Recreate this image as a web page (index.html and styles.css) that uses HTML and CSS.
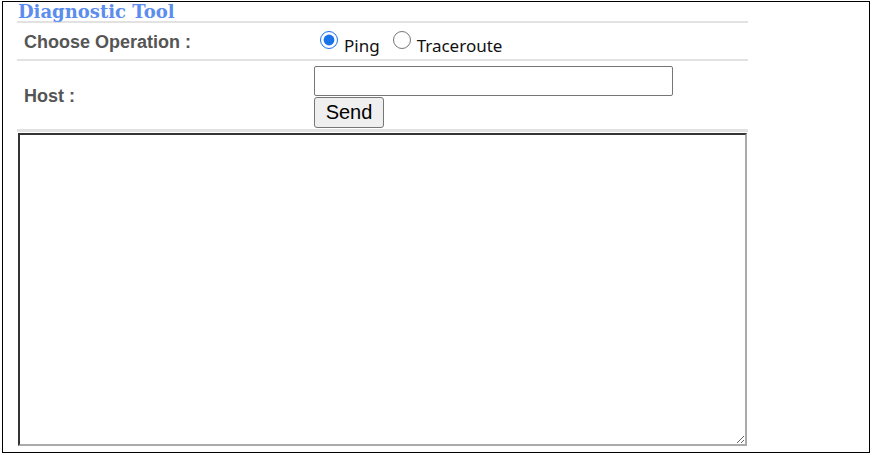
FILE: index.html
```html
<!DOCTYPE html>
<html>
<head>
<meta charset="utf-8">
<link rel="stylesheet" href="styles.css">
</head>
<body>
<div class="frame">
  <div class="panel">
    <div class="title">Diagnostic Tool</div>
    <div class="row row-op">
      <div class="label">Choose Operation :</div>
      <div class="field">
        <label class="opt"><input type="radio" name="op" checked>Ping</label>
        <label class="opt"><input type="radio" name="op">Traceroute</label>
      </div>
    </div>
    <div class="row row-host">
      <div class="label">Host :</div>
      <div class="field stack">
        <input type="text" class="host">
        <button class="send">Send</button>
      </div>
    </div>
    <textarea class="output"></textarea>
  </div>
</div>
</body>
</html>
```
FILE: styles.css
```css
html, body { margin: 0; padding: 0; background: #fff; }
.frame {
  margin: 1px 2px;
  height: 450px;
  border: 1px solid #000;
  overflow: hidden;
}
.panel {
  width: 731px;
  margin-left: 14px;
  display: flex;
  flex-direction: column;
}
.title {
  font-family: "DejaVu Serif", serif;
  font-weight: bold;
  font-size: 18px;
  line-height: 19px;
  color: #5b8def;
  padding-left: 1px;
  border-bottom: 2px solid #e2e2e2;
  height: 19px;
}
.row {
  display: grid;
  grid-template-columns: 297px 1fr;
  align-items: center;
  border-bottom: 2px solid #e2e2e2;
}
.row-op { height: 36px; }
.row-host { height: 68px; border-bottom-width: 3px; }
.label {
  font-family: "Liberation Sans", Arial, sans-serif;
  font-weight: bold;
  font-size: 18px;
  color: #555;
  padding-left: 7px;
}
.row-op .label { margin-top: 2px; }
.row-host .label { margin-top: 2px; }
.field { display: flex; align-items: center; }
.opt {
  font-family: "Noto Sans", sans-serif;
  font-size: 17px;
  color: #111;
  margin-top: 8px;
  display: flex;
  align-items: center;
}
.opt input {
  width: 18px;
  height: 18px;
  margin: 0 6px 0 6px;
  position: relative;
  top: -5px;
  accent-color: #1a73e8;
}
.opt + .opt input { margin-left: 13px; }
.stack { flex-direction: column; align-items: flex-start; }
.host {
  width: 359px;
  height: 30px;
  box-sizing: border-box;
  margin: 4px 0 0 0;
  border: 1px solid #767676;
  border-radius: 2px;
}
.send {
  margin: 1px 0 0 0;
  height: 31px;
  width: 70px;
  font-family: "Liberation Sans", Arial, sans-serif;
  font-size: 20px;
  color: #000;
  background: #efefef;
  border: 1px solid #767676;
  border-radius: 3px;
  padding: 0;
}
.output {
  margin: 1px 0 0 1px;
  width: 729px;
  height: 313px;
  box-sizing: border-box;
  border: 2px inset #888;
  border-right-color: #aaa;
  border-bottom-color: #aaa;
  resize: both;
}
```
